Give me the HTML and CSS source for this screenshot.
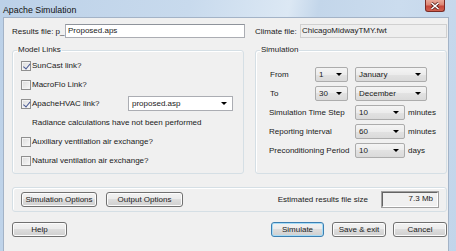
FILE: index.html
```html
<!DOCTYPE html>
<html lang="en">
<head>
    <meta charset="UTF-8">
    <title>Apache Simulation</title>
    <link rel="stylesheet" href="styles.css">
</head>
<body>
    <div class="window">
        <div class="titlebar">
            <span class="title">Apache Simulation</span>
            <span class="close">
                <svg width="10" height="8" viewBox="0 0 10 8"><path d="M1.5 1 L8.5 7 M8.5 1 L1.5 7" stroke="#5a1f1a" stroke-width="3"/><path d="M1.5 1 L8.5 7 M8.5 1 L1.5 7" stroke="#fff" stroke-width="1.6"/></svg>
            </span>
        </div>

        <div class="client">
            <div class="top">
                <div class="field">
                    <span class="results-label">Results file: p_</span>
                    <div class="text">Proposed.aps</div>
                </div>
                <div class="field">
                    <span class="climate-label">Climate file:</span>
                    <div class="readonly">ChicagoMidwayTMY.fwt</div>
                </div>
            </div>

            <div class="groups">
                <fieldset class="group">
                    <legend>Model Links</legend>
                    <div class="row"><span class="check on"></span>SunCast link?</div>
                    <div class="row"><span class="check"></span>MacroFlo Link?</div>
                    <div class="row">
                        <span class="check on"></span><span class="hvac-label">ApacheHVAC link?</span>
                        <div class="combo edit"><span>proposed.asp</span><i class="arrow"></i></div>
                    </div>
                    <div class="row note">Radiance calculations have not been performed</div>
                    <div class="row"><span class="check"></span>Auxiliary ventilation air exchange?</div>
                    <div class="row"><span class="check"></span>Natural ventilation air exchange?</div>
                </fieldset>

                <fieldset class="group">
                    <legend>Simulation</legend>
                    <div class="simgrid">
                        <span>From</span>
                        <div class="combo day"><span>1</span><i class="arrow"></i></div>
                        <div class="combo month"><span>January</span><i class="arrow"></i></div>

                        <span>To</span>
                        <div class="combo day"><span>30</span><i class="arrow"></i></div>
                        <div class="combo month"><span>December</span><i class="arrow"></i></div>

                        <span class="long">Simulation Time Step</span>
                        <div class="combo step"><span>10</span><i class="arrow"></i></div>
                        <span class="unit">minutes</span>

                        <span class="long">Reporting interval</span>
                        <div class="combo step"><span>60</span><i class="arrow"></i></div>
                        <span class="unit">minutes</span>

                        <span class="long">Preconditioning Period</span>
                        <div class="combo step"><span>10</span><i class="arrow"></i></div>
                        <span class="unit">days</span>
                    </div>
                </fieldset>
            </div>

            <div class="panel">
                <button class="btn sim-opt">Simulation Options</button>
                <button class="btn out-opt">Output Options</button>
                <span class="estimate">Estimated results file size</span>
                <div class="size">7.3 Mb</div>
            </div>

            <div class="actions">
                <button class="btn help">Help</button>
                <button class="btn default simulate">Simulate</button>
                <button class="btn save">Save &amp; exit</button>
                <button class="btn cancel">Cancel</button>
            </div>
        </div>
    </div>
</body>
</html>
```

FILE: styles.css
```css
* {
    box-sizing: border-box;
}
body {
    margin: 0;
    font-family: "Liberation Sans", Arial, sans-serif;
    font-size: 8px;
    color: #1a1a1a;
}
.window {
    width: 456px;
    height: 251px;
    padding: 0 7px 0 3px;
    display: flex;
    flex-direction: column;
    overflow: hidden;
    background: linear-gradient(100deg, #bcd1e8 0%, #c8daed 38%, #dce8f4 58%, #c3d6ea 64%, #cbdcee 80%, #c2d5ea 100%);
}
.titlebar {
    height: 17px;
    display: flex;
    justify-content: space-between;
    align-items: flex-start;
}
.title {
    font-size: 8.8px;
    line-height: 16px;
    padding-top: 2px;
    color: #111;
}
.close {
    width: 20px;
    height: 12px;
    margin-right: 4px;
    display: flex;
    align-items: center;
    justify-content: center;
    border: 1px solid #7a2a24;
    border-top: none;
    border-radius: 0 0 3px 3px;
    background: linear-gradient(#e9a899 0%, #dc8573 45%, #c6463a 55%, #d0614f 100%);
}
.client {
    flex: 1;
    background: #f0f0f0;
    border: 1px solid #a3b3c7;
    border-bottom: none;
    padding: 6px 1px 0 8px;
}
.top {
    display: grid;
    grid-template-columns: 233px 192px;
    column-gap: 10px;
    height: 14px;
}
.field {
    display: flex;
    align-items: center;
}
.results-label {
    width: 53px;
}
.climate-label {
    width: 45px;
}
.text, .readonly {
    height: 14px;
    flex: 1;
    line-height: 12px;
    padding: 0 2px;
    border: 1px solid #abadb3;
    border-top-color: #8e939b;
    background: #fff;
}
.readonly {
    padding-left: 1px;
    background: #eeeeee;
    border-color: #d0d0d0;
}
.groups {
    margin-top: 7px;
    display: grid;
    grid-template-columns: 232px 192px;
    column-gap: 11px;
}
.group {
    margin: 0;
    padding: 1px 0 3px 0;
    min-width: 0;
    border: 1px solid #d5dfe5;
    border-radius: 3px;
    box-shadow: inset 1px 1px 0 #fff;
}
legend {
    margin-left: 4px;
    padding: 0 1px;
    line-height: 10px;
}
.row {
    height: 19px;
    display: flex;
    align-items: center;
    padding-left: 8px;
}
.row.note {
    padding-left: 19px;
}
.check {
    width: 10px;
    height: 10px;
    margin-right: 1px;
    border: 1px solid #8f8f8f;
    background: linear-gradient(135deg, #dcdcdc, #f8f8f8);
    box-shadow: inset 0 0 0 1px #f4f4f4;
    position: relative;
}
.check.on::after {
    content: "";
    position: absolute;
    left: 2.5px;
    top: 0.5px;
    width: 2.5px;
    height: 5.5px;
    border: solid #4a5a94;
    border-width: 0 1.5px 1.5px 0;
    transform: rotate(40deg);
}
.hvac-label {
    width: 96px;
}
.combo {
    height: 15px;
    display: flex;
    align-items: center;
    justify-content: space-between;
    padding: 0 5px 0 3px;
    border: 1px solid #acacac;
    border-radius: 2px;
    background: linear-gradient(#f4f4f4 0%, #ececec 50%, #e2e2e2 50%, #dadada 100%);
}
.combo.edit {
    width: 105px;
    background: #fff;
    border-color: #abadb3;
    border-radius: 0;
}
.arrow {
    width: 0;
    height: 0;
    border-left: 3px solid transparent;
    border-right: 3px solid transparent;
    border-top: 3px solid #000;
}
.simgrid {
    padding: 9px 0 0 14px;
    display: grid;
    grid-template-columns: 45px 40px 50px auto;
    grid-auto-rows: 19px;
    align-items: center;
}
.simgrid .long {
    grid-column: 1 / span 2;
    margin-left: -1px;
    white-space: nowrap;
}
.combo.day {
    width: 33px;
}
.combo.month {
    width: 72px;
    grid-column: 3 / span 2;
}
.combo.step {
    width: 50px;
}
.unit {
    padding-left: 3px;
}
.btn {
    height: 15px;
    padding: 0;
    font-family: inherit;
    font-size: 8px;
    color: #1a1a1a;
    border: 1px solid #707070;
    border-radius: 3px;
    background: linear-gradient(#f2f2f2 0%, #ebebeb 50%, #dddddd 50%, #cfcfcf 100%);
    box-shadow: inset 0 0 0 1px #fcfcfc;
}
.btn.default {
    border-color: #3c7fb1;
    box-shadow: inset 0 0 0 1px #a6dcf7;
}
.panel {
    margin-top: 13px;
    height: 25px;
    display: flex;
    align-items: center;
    padding: 0 8px;
    border: 1px solid #d5dfe5;
    border-radius: 3px;
    box-shadow: inset 1px 1px 0 #fff;
}
.sim-opt {
    width: 76px;
}
.out-opt {
    width: 77px;
    margin-left: 9px;
}
.estimate {
    margin-left: auto;
}
.size {
    width: 56px;
    height: 15px;
    margin-left: 14px;
    padding-right: 4px;
    text-align: right;
    line-height: 12px;
    border: 1px solid;
    border-color: #646464 #ffffff #ffffff #646464;
    box-shadow: 0 0 0 1px #a0a0a0;
}
.actions {
    margin-top: 10px;
    display: flex;
}
.help {
    width: 55px;
}
.simulate {
    width: 53px;
    margin-left: auto;
}
.save {
    width: 54px;
    margin-left: 8px;
}
.cancel {
    width: 54px;
    margin-left: 7px;
}
```
